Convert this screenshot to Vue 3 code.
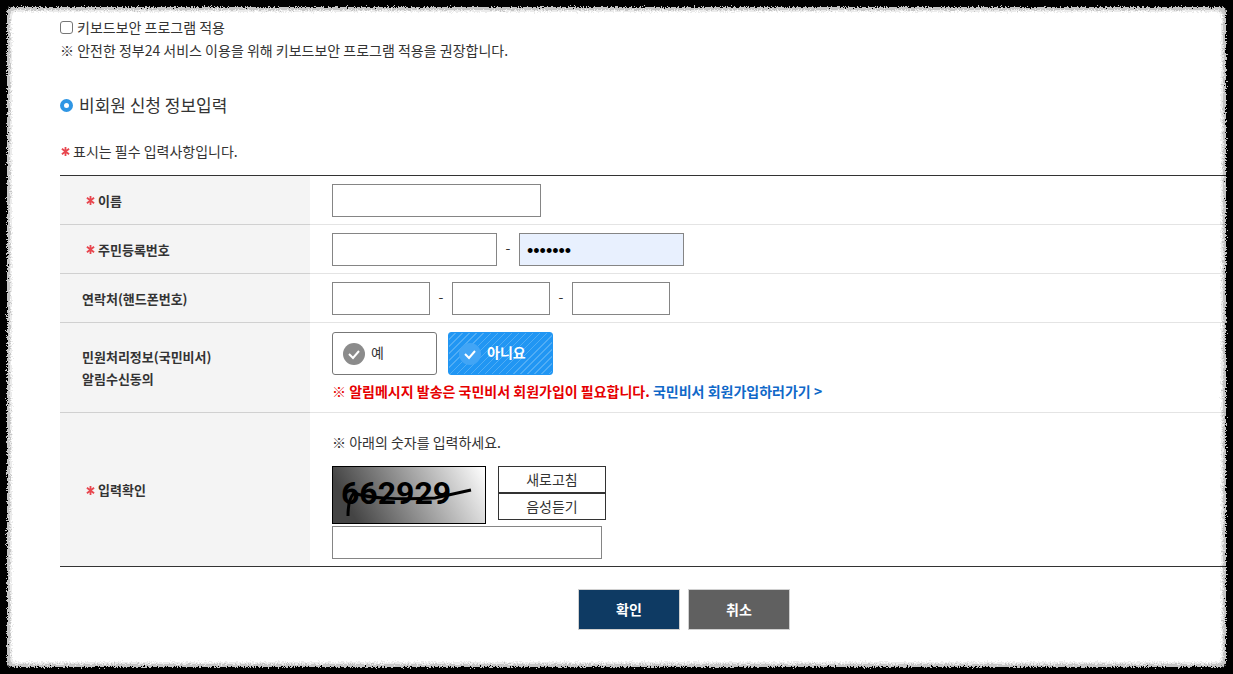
<script setup>
import { ref } from 'vue'

const security = ref(false)
const name = ref('')
const idFront = ref('')
const idBack = ref('1234567')
const phone = ref(['', '', ''])
const notify = ref('no')
const answer = ref('')
const starPath = 'M5 0V10M1 2L9 8M9 2L1 8'
</script>

<template>
  <div class="page">
    <form class="content" @submit.prevent>
      <label class="security">
        <input v-model="security" type="checkbox" />
        <span>키보드보안 프로그램 적용</span>
      </label>
      <p class="line">※ 안전한 정부24 서비스 이용을 위해 키보드보안 프로그램 적용을 권장합니다.</p>

      <h2><span class="bullet"></span>비회원 신청 정보입력</h2>

      <p class="note">
        <svg class="star" viewBox="0 0 10 10" aria-hidden="true"><path :d="starPath" /></svg>
        표시는 필수 입력사항입니다.
      </p>

      <table>
        <colgroup>
          <col class="col-label" />
          <col />
        </colgroup>
        <tbody>
          <tr>
            <th scope="row">
              <label class="required" for="name">
                <svg class="star" viewBox="0 0 10 10" aria-hidden="true"><path :d="starPath" /></svg>이름
              </label>
            </th>
            <td><input id="name" v-model="name" class="field w-name" type="text" /></td>
          </tr>
          <tr>
            <th scope="row">
              <label class="required" for="id-front">
                <svg class="star" viewBox="0 0 10 10" aria-hidden="true"><path :d="starPath" /></svg>주민등록번호
              </label>
            </th>
            <td>
              <div class="group">
                <input id="id-front" v-model="idFront" class="field w-id" type="text" />
                <span class="dash">-</span>
                <input v-model="idBack" class="field w-id filled" type="password" autocomplete="off" aria-label="주민등록번호 뒷자리" />
              </div>
            </td>
          </tr>
          <tr>
            <th scope="row"><label for="phone-0">연락처(핸드폰번호)</label></th>
            <td>
              <div class="group">
                <template v-for="(part, i) in phone" :key="i">
                  <span v-if="i > 0" class="dash">-</span>
                  <input :id="'phone-' + i" v-model="phone[i]" class="field w-phone" type="text" :aria-label="'연락처 ' + (i + 1)" />
                </template>
              </div>
            </td>
          </tr>
          <tr>
            <th scope="row">민원처리정보(국민비서)<br />알림수신동의</th>
            <td class="consent">
              <div class="choices">
                <label class="choice">
                  <input v-model="notify" type="radio" name="notify" value="yes" />
                  <svg class="tick" viewBox="0 0 22 22" aria-hidden="true"><circle cx="11" cy="11" r="11" /><path d="M6 11L10 15L16 8" /></svg>
                  <span>예</span>
                </label>
                <label class="choice">
                  <input v-model="notify" type="radio" name="notify" value="no" />
                  <svg class="tick" viewBox="0 0 22 22" aria-hidden="true"><circle cx="11" cy="11" r="11" /><path d="M6 11L10 15L16 8" /></svg>
                  <span>아니요</span>
                </label>
              </div>
              <p class="warning">※ 알림메시지 발송은 국민비서 회원가입이 필요합니다. <a href="#">국민비서 회원가입하러가기 &gt;</a></p>
            </td>
          </tr>
          <tr>
            <th scope="row">
              <label class="required" for="answer">
                <svg class="star" viewBox="0 0 10 10" aria-hidden="true"><path :d="starPath" /></svg>입력확인
              </label>
            </th>
            <td class="check">
              <p class="line">※ 아래의 숫자를 입력하세요.</p>
              <div class="captcha-row">
                <svg class="captcha" viewBox="0 0 152 56" role="img" aria-label="확인 숫자">
                  <defs>
                    <linearGradient id="shade" x1="0" y1="0.2" x2="1" y2="0">
                      <stop offset="0" stop-color="#444" />
                      <stop offset="1" stop-color="#fff" />
                    </linearGradient>
                  </defs>
                  <rect width="152" height="56" fill="url(#shade)" />
                  <text x="8" y="37">662929</text>
                  <path d="M15 49C15 40 16 31 21 26C34 31 65 33 102 31L138 23" />
                </svg>
                <div class="captcha-buttons">
                  <button type="button">새로고침</button>
                  <button type="button">음성듣기</button>
                </div>
              </div>
              <input id="answer" v-model="answer" class="field w-answer" type="text" />
            </td>
          </tr>
        </tbody>
      </table>

      <div class="actions">
        <button class="confirm" type="submit">확인</button>
        <button class="cancel" type="button">취소</button>
      </div>
    </form>

    <svg class="edge" aria-hidden="true">
      <defs>
        <filter id="rough" filterUnits="userSpaceOnUse" x="0" y="0" width="100%" height="100%" color-interpolation-filters="sRGB">
          <feTurbulence type="fractalNoise" baseFrequency="0.7" numOctaves="2" seed="4" result="noise" />
          <feDisplacementMap in="SourceGraphic" in2="noise" scale="6" xChannelSelector="R" yChannelSelector="G" />
        </filter>
      </defs>
      <g filter="url(#rough)">
        <rect class="ring faint" x="-12" y="-12" rx="28" />
        <rect class="ring soft" x="-12" y="-12" rx="28" />
        <rect class="ring dark" x="-12" y="-12" rx="24" />
      </g>
    </svg>
  </div>
</template>

<style>
body {
  margin: 0;
  background: #fff;
}
</style>

<style scoped>
* {
  box-sizing: border-box;
}
.page {
  position: relative;
  min-height: 100vh;
  overflow: hidden;
  background: #fff;
  color: #333;
  font-family: "Noto Sans CJK KR", "Noto Sans", sans-serif;
  font-size: 14px;
  line-height: 22px;
}
.content {
  padding: 16px 0 43px 60px;
}
p,
h2 {
  margin: 0;
}
input,
button {
  margin: 0;
  font: inherit;
}
.security {
  display: flex;
  width: fit-content;
  align-items: center;
  gap: 4px;
}
.security input {
  appearance: none;
  width: 13px;
  height: 13px;
  border: 1px solid #767676;
  border-radius: 3px;
  background: #fff;
}
.security input:checked {
  background: #2196f3;
}
.security + .line {
  margin-top: 1px;
}
h2 {
  display: flex;
  align-items: center;
  gap: 6px;
  margin-top: 31px;
  font-size: 17px;
  font-weight: 400;
  line-height: 26px;
}
.bullet {
  width: 13px;
  height: 13px;
  border: 4px solid #2f96e4;
  border-radius: 50%;
}
.note {
  display: flex;
  align-items: center;
  gap: 3px;
  margin: 22px 0 13px 1px;
}
.star {
  flex: none;
  width: 9px;
  height: 9px;
  fill: none;
  stroke: #e8474f;
  stroke-width: 2;
}
table {
  width: 100%;
  table-layout: fixed;
  border-spacing: 0;
  border-top: 1px solid #333;
  border-bottom: 1px solid #333;
}
.col-label {
  width: 250px;
}
th,
td {
  padding: 8px 22px 7px;
  border-bottom: 1px solid #e4e4e4;
  text-align: left;
  vertical-align: middle;
}
th {
  background: #f4f4f4;
  border-bottom-color: #d0d0d0;
  font-size: 13px;
  font-weight: 700;
}
tr:last-child th,
tr:last-child td {
  border-bottom: 0;
}
.required {
  display: flex;
  align-items: center;
  gap: 3px;
  padding-left: 4px;
}
.field {
  display: block;
  height: 33px;
  padding: 0 7px;
  border: 1px solid #858585;
  border-radius: 0;
  background: #fff;
  color: #000;
}
.w-name {
  width: 209px;
}
.w-id {
  width: 165px;
}
.w-phone {
  width: 98px;
}
.w-answer {
  width: 270px;
}
.filled {
  padding-top: 3px;
  background: #e8f0fe;
  font-family: "Liberation Sans", sans-serif;
  font-size: 18px;
}
.group {
  display: flex;
  align-items: center;
}
.dash {
  width: 22px;
  padding-bottom: 5px;
  text-align: center;
}
.consent {
  padding: 9px 22px 10px;
}
.choices {
  display: flex;
  gap: 11px;
}
.choice {
  display: flex;
  align-items: center;
  gap: 6px;
  width: 105px;
  height: 43px;
  padding: 0 10px;
  border: 1px solid #777;
  border-radius: 3px;
}
.choice span {
  padding-bottom: 4px;
}
.choice input {
  position: absolute;
  width: 1px;
  height: 1px;
  opacity: 0;
}
.tick {
  width: 22px;
  height: 22px;
  fill: #8b8b8b;
}
.tick path {
  fill: none;
  stroke: #fff;
  stroke-width: 2;
}
.choice:has(input:checked) {
  border-color: #2196f3;
  background: repeating-linear-gradient(135deg, #2196f3 0 4px, #50adf5 4px 5px);
  color: #fff;
  font-weight: 700;
}
.choice:has(input:checked) .tick {
  fill: #42a5f5;
}
.warning {
  margin-top: 5px;
  color: #e60000;
  font-weight: 700;
}
.warning a {
  color: #1068c8;
  text-decoration: none;
}
.check {
  padding-top: 18px;
}
.captcha-row {
  display: flex;
  gap: 12px;
  margin: 13px 0 2px;
}
.captcha {
  width: 154px;
  height: 58px;
  border: 1px solid #000;
}
.captcha text {
  font-family: Roboto, sans-serif;
  font-size: 32px;
  font-weight: 700;
}
.captcha path {
  fill: none;
  stroke: #000;
  stroke-width: 3;
}
.captcha-buttons {
  display: flex;
  flex-direction: column;
}
.captcha-buttons button {
  width: 108px;
  height: 27px;
  padding: 0 0 2px;
  border: 1px solid #333;
  background: #fff;
  color: #333;
}
.actions {
  display: flex;
  justify-content: center;
  gap: 8px;
  margin-top: 22px;
  padding-left: 75px;
}
.actions button {
  width: 102px;
  height: 41px;
  padding: 0 0 2px;
  border: 1px solid #d0d0d0;
  color: #fff;
  font-weight: 700;
}
.actions .confirm {
  background: #0e3a63;
}
.actions .cancel {
  background: #606060;
}
.edge {
  position: absolute;
  inset: 0;
  width: 100%;
  height: 100%;
  pointer-events: none;
}
.ring {
  width: calc(100% + 24px);
  height: calc(100% + 24px);
  fill: none;
}
.faint {
  stroke: rgba(0, 0, 0, 0.08);
  stroke-width: 48px;
}
.soft {
  stroke: rgba(0, 0, 0, 0.16);
  stroke-width: 44px;
}
.dark {
  stroke: #000;
  stroke-width: 38px;
}
</style>
